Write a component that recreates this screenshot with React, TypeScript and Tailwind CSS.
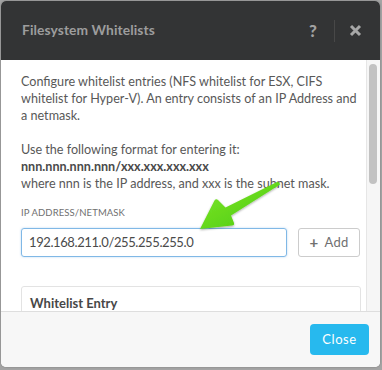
import React from "react"

const font = { fontFamily: "Lato, 'Open Sans', 'Liberation Sans', sans-serif" }

function GreenArrow() {
  return (
    <svg className="absolute left-0 top-0 pointer-events-none" width="382" height="370" viewBox="0 0 382 370">
      <defs>
        <linearGradient id="arrowFill" x1="0" y1="0" x2="1" y2="1">
          <stop offset="0%" stopColor="#7ee82a" />
          <stop offset="100%" stopColor="#4cc80f" />
        </linearGradient>
        <filter id="arrowShadow" x="-20%" y="-20%" width="140%" height="140%">
          <feDropShadow dx="0" dy="1" stdDeviation="0.8" floodColor="#000" floodOpacity="0.35" />
        </filter>
      </defs>
      <path
        d="M200 229 L214.5 200.5 Q216 198.5 218 200 L225.5 207.5 L277 182 Q280 181.5 280 184.5 L231 215.5 L234 223 Q234.5 225.5 232 225.5 Z"
        fill="url(#arrowFill)"
        filter="url(#arrowShadow)"
        strokeLinejoin="round"
      />
    </svg>
  )
}

export default function App() {
  return (
    <div className="relative w-[382px] h-[370px] bg-[#a4a4a4] pl-px pt-px overflow-hidden" style={font}>
      <div className="w-[379px] h-[366px] rounded-[5px] overflow-hidden flex flex-col bg-white shadow-[0_0_2px_rgba(0,0,0,0.3)]">
        {/* header */}
        <div className="h-[59px] shrink-0 bg-[#333435] flex items-center pl-[21px] pr-[18px]">
          <div className="flex-1 text-[13.8px] font-bold text-[#9d9d9d] tracking-[0.1px]">Filesystem Whitelists</div>
          <div className="text-[17px] font-black text-[#a2a2a2] w-[14px] text-center">?</div>
          <div className="mx-[14px] w-px h-[22px] bg-[#484848]" />
          <svg width="13" height="13" viewBox="0 0 13 13">
            <path d="M2 2 L11 11 M11 2 L2 11" stroke="#a7a7a7" strokeWidth="3" strokeLinecap="butt" />
          </svg>
        </div>

        {/* body */}
        <div className="h-[251px] shrink-0 flex">
          <div className="flex-1 overflow-hidden pl-[20px] pr-[6px] pt-[13px] text-[12.6px] leading-[17px] text-[#585858]">
            <p>
              Configure whitelist entries (NFS whitelist for ESX, CIFS whitelist for Hyper-V). An entry consists of an IP Address and a netmask.
            </p>
            <p className="mt-[17px]">Use the following format for entering it:</p>
            <p className="font-bold text-[#4a4a4a]">nnn.nnn.nnn.nnn/xxx.xxx.xxx.xxx</p>
            <p>where nnn is the IP address, and xxx is the subnet mask.</p>

            <div className="mt-[15px] text-[9.5px] leading-[12px] text-[#6f6f6f] uppercase tracking-[0.1px]">IP Address/Netmask</div>
            <div className="mt-[9px] flex gap-[11px]">
              <div className="w-[267px] h-[29px] rounded-[3px] border border-[#80b8e6] shadow-[0_0_2px_rgba(100,170,230,0.5)] flex items-center pl-[7px] text-[13px] tracking-[-0.4px] text-[#4a4a4a]">
                192.168.211.0/255.255.255.0
              </div>
              <div className="w-[62px] h-[29px] rounded-[3px] border border-[#cccccc] flex items-center justify-center gap-[6px] text-[13px] text-[#707070] tracking-[0.3px]">
                <span className="text-[15px] font-bold leading-none -mt-px">+</span>
                <span>Add</span>
              </div>
            </div>

            <div className="mt-[29px] w-[340px] rounded-[3px] border border-[#e3e3e3] pl-[8px] pt-[8px] h-[60px]">
              <div className="text-[13px] leading-[16px] font-bold text-[#474747]">Whitelist Entry</div>
            </div>
          </div>
          <div className="w-[14px] shrink-0 bg-[#f6f6f6] border-l border-[#e6e6e6] pt-[4px] pl-[2px]">
            <div className="w-[8px] h-[120px] rounded-full bg-[#c2c2c2]" />
          </div>
        </div>

        {/* footer */}
        <div className="flex-1 bg-[#f7f7f7] border-t border-[#dedede] flex justify-end items-start pt-[12px] pr-[11px]">
          <div className="w-[59px] h-[31px] rounded-[4px] bg-[#27b9ee] text-white text-[13px] tracking-[0.6px] flex items-center justify-center">
            Close
          </div>
        </div>
      </div>
      <GreenArrow />
    </div>
  )
}
